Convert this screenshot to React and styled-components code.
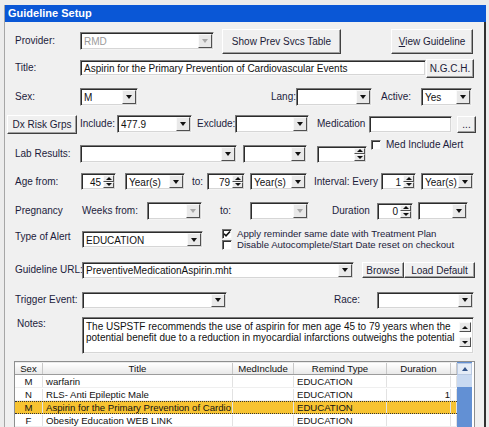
import React from 'react'
import styled, { createGlobalStyle, css } from 'styled-components'

const GlobalStyle = createGlobalStyle`
  html, body { margin: 0; padding: 0; }
  body {
    background: #ececec;
    font-family: "Liberation Sans", Arial, sans-serif;
    font-size: 10px;
    color: #1c1c38;
    overflow: hidden;
  }
`;

const sunken = css`
  box-sizing: border-box;
  background: #fff;
  border: 1px solid;
  border-color: #7a7a7a #f4f4f4 #f4f4f4 #7a7a7a;
  box-shadow: inset 1px 1px 0 #2c2c2c, inset -1px -1px 0 #d6d6d6;
`;

const Window = styled.div`
  box-sizing: border-box;
  margin: 5px 0 0 4px;
  width: 482px;
  height: 422px;
  border-left: 1px solid #a6a6a6;
  display: flex;
  flex-direction: column;
  overflow: hidden;
`;

const TitleBar = styled.div`
  flex: none;
  height: 17px;
  background: #0a57d6;
  color: #fff;
  font-weight: bold;
  font-size: 11px;
  line-height: 17px;
  padding-left: 3px;
`;

const Body = styled.div`
  flex: 1;
  display: flex;
  flex-direction: column;
  background: #f0f0f0;
  border-right: 2px solid #303030;
  min-height: 0;
`;

const FormRow = styled.div`
  flex: none;
  display: flex;
  align-items: ${p => p.$align || 'center'};
  height: ${p => p.$h}px;
  margin-top: ${p => p.$mt || 0}px;
`;

const Label = styled.span`
  flex: none;
  width: ${p => p.$w}px;
  margin-left: ${p => p.$ml || 0}px;
  margin-top: ${p => p.$mt || 0}px;
  line-height: 12px;
  white-space: nowrap;
  color: #1c1c3c;
`;

const Button = styled.button`
  flex: none;
  box-sizing: border-box;
  width: ${p => p.$w}px;
  height: ${p => p.$h}px;
  margin-left: ${p => p.$ml || 0}px;
  padding: 0;
  background: #f0f0f0;
  border: 1px solid;
  border-color: #fff #404040 #404040 #fff;
  box-shadow: inset -1px -1px 0 #a0a0a0;
  font: inherit;
  color: #1c1c38;
  white-space: nowrap;

  u { text-decoration: underline; }
`;

const ComboFrame = styled.div`
  ${sunken}
  flex: none;
  display: flex;
  align-items: stretch;
  width: ${p => p.$w}px;
  height: ${p => p.$h || 18}px;
  margin-left: ${p => p.$ml || 0}px;
  margin-top: ${p => p.$mt || 0}px;
`;

const FieldText = styled.span`
  flex: 1;
  min-width: 0;
  overflow: hidden;
  white-space: nowrap;
  padding: 1px 2px 0 3px;
  display: flex;
  align-items: center;
  justify-content: ${p => (p.$right ? 'flex-end' : 'flex-start')};
  color: ${p => (p.$disabled ? '#9a9a9a' : '#111')};
`;

const DropButton = styled.span`
  flex: none;
  box-sizing: border-box;
  width: 14px;
  margin: 1px 1px 1px 0;
  background: #e9e9e9;
  border: 1px solid;
  border-color: #fafafa #505050 #505050 #fafafa;
  display: flex;
  align-items: center;
  justify-content: center;

  &::after {
    content: '';
    border-left: 3.5px solid transparent;
    border-right: 3.5px solid transparent;
    border-top: 4px solid ${p => (p.$disabled ? '#a8a8a8' : '#111')};
  }
`;

const SpinColumn = styled.span`
  flex: none;
  width: 11px;
  margin: 1px 1px 1px 0;
  display: flex;
  flex-direction: column;
`;

const ArrowButton = styled.span`
  flex: ${p => (p.$fixed ? 'none' : 1)};
  height: ${p => (p.$fixed ? '10px' : 'auto')};
  box-sizing: border-box;
  background: #e9e9e9;
  border: 1px solid;
  border-color: #fafafa #505050 #505050 #fafafa;
  display: flex;
  align-items: center;
  justify-content: center;

  &::after {
    content: '';
    border-left: 3px solid transparent;
    border-right: 3px solid transparent;
    ${p => (p.$up ? 'border-bottom' : 'border-top')}: 3px solid #111;
  }
`;

const CheckBox = styled.span`
  flex: none;
  box-sizing: border-box;
  width: 10px;
  height: 10px;
  background: #fff;
  border: 1px solid;
  border-color: #6f6f6f #f4f4f4 #f4f4f4 #6f6f6f;
  box-shadow: inset 1px 1px 0 #303030;
  display: flex;
  align-items: center;
  justify-content: center;
`;

const CheckLabel = styled.span`
  flex: none;
  display: flex;
  align-items: center;
  gap: 5px;
  margin-left: ${p => p.$ml || 0}px;
  white-space: nowrap;
  align-self: ${p => (p.$raise ? 'flex-start' : 'auto')};
  margin-top: ${p => (p.$raise ? '-6px' : '0')};
  height: 11px;
  color: #1c1c3c;
`;

const CheckGroup = styled.div`
  flex: none;
  margin-left: ${p => p.$ml}px;
  margin-top: ${p => p.$mt}px;
  display: flex;
  flex-direction: column;
  font-size: 9.6px;
`;

const NotesBox = styled.div`
  ${sunken}
  flex: none;
  width: ${p => p.$w}px;
  height: 37px;
  display: flex;
`;

const NotesText = styled.div`
  flex: 1;
  min-width: 0;
  padding: 3px 0 0 3px;
  line-height: 11px;
  color: #111;

  div { white-space: nowrap; overflow: hidden; }
`;

const NotesScroll = styled.div`
  flex: none;
  width: 12px;
  margin: 4px 2px 0 0;
  display: flex;
  flex-direction: column;
  gap: 5px;
`;

const Grid = styled.div`
  flex: 1;
  display: flex;
  box-sizing: border-box;
  width: 461px;
  margin: 7px 0 0 9px;
  background: #fff;
  border: 1px solid #8e8f8f;
  border-bottom: none;
  min-height: 0;
`;

const GridBody = styled.div`
  flex: none;
  width: 442px;
  display: flex;
  flex-direction: column;
  font-size: 9.6px;
`;

const GridRow = styled.div`
  display: grid;
  grid-template-columns: 28px 190px 61px 93px 64px 6px;
  box-sizing: border-box;
  height: ${p => (p.$head ? 15 : 14)}px;
  background: ${p => (p.$selected ? '#f7c331' : p.$head ? 'linear-gradient(#ffffff, #e9e9e9)' : '#fff')};
  border-top: 1px ${p => (p.$selected ? 'dotted #333' : 'solid transparent')};
  border-bottom: 1px ${p => (p.$selected ? 'dotted #333' : p.$head ? 'solid #9c9c9c' : 'solid #efefef')};
`;

const Cell = styled.div`
  overflow: hidden;
  white-space: nowrap;
  display: flex;
  align-items: center;
  justify-content: ${p => p.$justify || 'flex-start'};
  padding: ${p => (p.$justify ? '0' : '0 0 0 3px')};
  border-right: 1px solid ${p => (p.$head ? '#c8c8c8' : '#e2e2e2')};
  color: #111;
`;

const ScrollBar = styled.div`
  flex: none;
  width: 15px;
  display: flex;
  flex-direction: column;
  background: #6290d4;
  padding-top: 1px;
`;

const ScrollUp = styled.div`
  flex: none;
  height: 12px;
  background: #e4ecf7;
  border: 1px solid #b9c9e2;
  box-sizing: border-box;
  display: flex;
  align-items: center;
  justify-content: center;

  &::after {
    content: '';
    border-left: 3.5px solid transparent;
    border-right: 3.5px solid transparent;
    border-bottom: 4px solid #33548a;
  }
`;

const ScrollThumb = styled.div`
  flex: none;
  height: 12px;
  background: #c8d9f1;
`;

const ComboBox = ({ w, h, ml, mt, value = '', disabled }) => (
  <ComboFrame $w={w} $h={h} $ml={ml} $mt={mt}>
    <FieldText $disabled={disabled}>{value}</FieldText>
    <DropButton $disabled={disabled} />
  </ComboFrame>
);

const TextBox = ({ w, h, ml, value = '' }) => (
  <ComboFrame $w={w} $h={h} $ml={ml}>
    <FieldText>{value}</FieldText>
  </ComboFrame>
);

const Spin = ({ w, ml, value = '' }) => (
  <ComboFrame $w={w} $h={17} $ml={ml}>
    <FieldText $right>{value}</FieldText>
    <SpinColumn>
      <ArrowButton $up />
      <ArrowButton />
    </SpinColumn>
  </ComboFrame>
);

const Check = ({ checked }) => (
  <CheckBox>
    {checked && (
      <svg width="8" height="8" viewBox="0 0 8 8">
        <path d="M1 3.8 L3 5.8 L7 1.5" stroke="#111" strokeWidth="1.6" fill="none" />
      </svg>
    )}
  </CheckBox>
);

const rows = [
  { sex: 'M', title: 'warfarin', remind: 'EDUCATION', duration: '' },
  { sex: 'N', title: 'RLS- Anti Epileptic Male', remind: 'EDUCATION', duration: '1' },
  { sex: 'M', title: 'Aspirin for the Primary Prevention of Cardio', remind: 'EDUCATION', duration: '', selected: true },
  { sex: 'F', title: 'Obesity Education WEB LINK', remind: 'EDUCATION', duration: '' },
];

const App = () => {
  return (
    <>
      <GlobalStyle />
      <Window>
        <TitleBar>Guideline Setup</TitleBar>
        <Body>
          <FormRow $mt={6} $h={26}>
            <Label $ml={10} $w={65}>Provider:</Label>
            <ComboBox w={134} value="RMD" disabled />
            <Button $ml={8} $w={119} $h={25}>Show Prev Svcs Table</Button>
            <Button $ml={50} $w={82} $h={25}><u>V</u>iew Guideline</Button>
          </FormRow>

          <FormRow $mt={4} $h={20}>
            <Label $ml={10} $w={65}>Title:</Label>
            <TextBox w={346} h={16} value="Aspirin for the Primary Prevention of Cardiovascular Events" />
            <Button $w={48} $h={19}>N.G.C.H.</Button>
          </FormRow>

          <FormRow $mt={10} $h={18}>
            <Label $ml={10} $w={65}>Sex:</Label>
            <ComboBox w={58} value="M" />
            <Label $ml={133} $w={25}>Lang:</Label>
            <ComboBox w={76} />
            <Label $ml={9} $w={40}>Active:</Label>
            <ComboBox w={51} value="Yes" />
          </FormRow>

          <FormRow $mt={8} $h={20}>
            <Button $ml={2} $w={70} $h={19}>Dx Risk Grps</Button>
            <Label $ml={3} $w={37}>Include:</Label>
            <ComboBox w={75} value="477.9" />
            <Label $ml={5} $w={38}>Exclude:</Label>
            <ComboBox w={74} />
            <Label $ml={8} $w={52}>Medication</Label>
            <TextBox w={83} h={17} />
            <Button $ml={5} $w={19} $h={17}>...</Button>
          </FormRow>

          <FormRow $mt={11} $h={18}>
            <Label $ml={10} $w={65}>Lab Results:</Label>
            <ComboBox w={157} />
            <ComboBox ml={6} w={64} />
            <Spin ml={10} w={50} />
            <CheckLabel $ml={4} $raise><Check />Med Include Alert</CheckLabel>
          </FormRow>

          <FormRow $mt={9} $h={19}>
            <Label $ml={10} $w={66}>Age from:</Label>
            <Spin w={35} value="45" />
            <ComboBox ml={9} w={60} h={17} value="Year(s)" />
            <Label $ml={7} $w={15}>to:</Label>
            <Spin w={38} value="79" />
            <ComboBox ml={5} w={57} h={17} value="Year(s)" />
            <Label $ml={7} $w={67}>Interval: Every</Label>
            <Spin w={35} value="1" />
            <ComboBox ml={5} w={53} h={17} value="Year(s)" />
          </FormRow>

          <FormRow $mt={11} $h={18}>
            <Label $ml={10} $w={67}>Pregnancy</Label>
            <Label $w={65}>Weeks from:</Label>
            <ComboBox w={55} disabled />
            <Label $ml={18} $w={30}>to:</Label>
            <ComboBox w={59} disabled />
            <Label $ml={23} $w={45}>Duration</Label>
            <Spin w={36} value="0" />
            <ComboBox ml={5} w={50} />
          </FormRow>

          <FormRow $mt={6} $h={26} $align="flex-start">
            <Label $ml={10} $w={67} $mt={5}>Type of Alert</Label>
            <ComboBox w={121} h={17} mt={5} value="EDUCATION" />
            <CheckGroup $ml={19} $mt={2}>
              <CheckLabel><Check checked />Apply reminder same date with Treatment Plan</CheckLabel>
              <CheckLabel><Check />Disable Autocomplete/Start Date reset on checkout</CheckLabel>
            </CheckGroup>
          </FormRow>

          <FormRow $mt={9} $h={18}>
            <Label $ml={10} $w={67}>Guideline URL:</Label>
            <ComboBox w={272} h={17} value="PreventiveMedicationAspirin.mht" />
            <Button $ml={8} $w={42} $h={16}>Browse</Button>
            <Button $w={71} $h={16}>Load Default</Button>
          </FormRow>

          <FormRow $mt={12} $h={18}>
            <Label $ml={10} $w={67}>Trigger Event:</Label>
            <ComboBox w={145} h={17} />
            <Label $ml={107} $w={43}>Race:</Label>
            <ComboBox w={97} h={17} />
          </FormRow>

          <FormRow $mt={8} $h={37} $align="flex-start">
            <Label $ml={12} $w={65} $mt={1}>Notes:</Label>
            <NotesBox $w={392}>
              <NotesText>
                <div>The USPSTF recommends the use of aspirin for men age 45 to 79 years when the</div>
                <div>potential benefit due to a reduction in myocardial infarctions outweighs the potential</div>
              </NotesText>
              <NotesScroll>
                <ArrowButton $up $fixed />
                <ArrowButton $fixed />
              </NotesScroll>
            </NotesBox>
          </FormRow>

          <Grid>
            <GridBody>
              <GridRow $head>
                <Cell $head $justify="center">Sex</Cell>
                <Cell $head $justify="center">Title</Cell>
                <Cell $head $justify="center">MedInclude</Cell>
                <Cell $head $justify="center">Remind Type</Cell>
                <Cell $head $justify="center">Duration</Cell>
                <Cell $head />
              </GridRow>
              {rows.map((row, i) => (
                <GridRow key={i} $selected={row.selected}>
                  <Cell $justify="center">{row.sex}</Cell>
                  <Cell>{row.title}</Cell>
                  <Cell />
                  <Cell>{row.remind}</Cell>
                  <Cell $justify="flex-end">{row.duration}</Cell>
                  <Cell />
                </GridRow>
              ))}
            </GridBody>
            <ScrollBar>
              <ScrollUp />
              <ScrollThumb />
            </ScrollBar>
          </Grid>
        </Body>
      </Window>
    </>
  );
};

export default App
